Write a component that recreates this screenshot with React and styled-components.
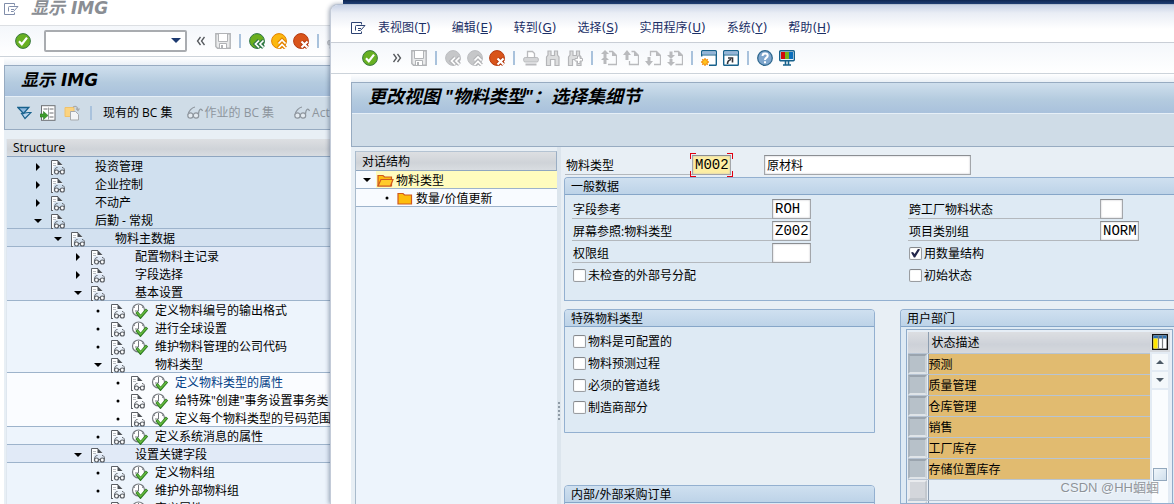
import React, { useState } from "react";
import styled, { createGlobalStyle, css } from "styled-components";

const GlobalStyle = createGlobalStyle`
  * {
    box-sizing: border-box;
  }
  body {
    margin: 0;
    overflow: hidden;
    background: #ffffff;
    color: #000000;
    font-family: "Open Sans", "Noto Sans CJK SC", sans-serif;
    font-size: 12px;
    line-height: 16px;
  }
  button, input, select {
    margin: 0;
    font: inherit;
    color: inherit;
  }
`;

/* ---------- windows ---------- */

const Desktop = styled.div`
  display: flex;
  height: 100vh;
  overflow: hidden;
  position: relative;
  background: linear-gradient(#0f2550, #1d3f7a) 343px 0 / 100% 4px no-repeat #ffffff;
`;

const BackWindow = styled.section`
  flex: 0 0 330px;
  display: flex;
  flex-direction: column;
  overflow: hidden;
  background: #ffffff;
`;

const FrontWindow = styled.section`
  flex: 1;
  min-width: 0;
  display: flex;
  flex-direction: column;
  margin-top: 4px;
  background: #ffffff;
  border-top: 1px solid #b4c0d2;
  border-left: 1px solid #c3cbd8;
  border-top-left-radius: 8px;
  box-shadow: -1px 0 4px rgba(40, 60, 90, 0.45);
  overflow: hidden;
  z-index: 1;
`;

const BackMenu = styled.header`
  display: flex;
  align-items: flex-start;
  gap: 12px;
  height: 26px;
  padding: 0 4px;
  border-bottom: 1px solid #dcdfe3;

  svg {
    margin-top: 3px;
    opacity: 0.6;
  }
`;

const MenuBar = styled.nav`
  display: flex;
  align-items: center;
  gap: 21px;
  height: 38px;
  padding: 9px 20px 0;
  border-bottom: 1px solid #c9ced6;
  background: linear-gradient(#c8d2e6 0, #e9edf5 8px, #ffffff 24px);

  svg {
    margin-right: -9px;
  }
`;

const MenuItem = styled.button`
  padding: 0;
  border: 0;
  background: none;
  color: #1b2f66;
  font-family: "DejaVu Sans", "Noto Sans CJK SC", sans-serif;
  white-space: nowrap;
`;

const Toolbar = styled.div`
  display: flex;
  align-items: center;
  gap: 6px;
  height: 31px;
  padding-left: ${({ $inset }) => $inset}px;
  border-bottom: 1px solid #ccd3da;
  background: linear-gradient(#f4f7fb, #ffffff);
`;

const IconButton = styled.button`
  display: flex;
  flex: none;
  padding: 0;
  border: 0;
  background: none;
  margin-left: ${({ $push }) => ($push ? 5 : 0)}px;
`;

const Divider = styled.span`
  flex: none;
  width: 2px;
  height: 14px;
  margin: 0 2px;
  background: #a9c2dc;
`;

const CommandField = styled.select`
  flex: none;
  appearance: none;
  width: 143px;
  height: 22px;
  margin-left: 7px;
  border: 2px solid #a9acb0;
  border-radius: 2px;
  background: #ffffff;
  grid-area: 1 / 1;
`;

const CommandWrap = styled.label`
  display: grid;
  align-items: center;

  svg {
    grid-area: 1 / 1;
    justify-self: end;
    margin-right: 6px;
    pointer-events: none;
  }
`;

const Sheet = styled.div`
  flex: 1;
  min-height: 0;
  display: flex;
  flex-direction: column;
  margin-left: ${({ $inset }) => $inset}px;
  padding-top: 8px;
  background: linear-gradient(#ffffff, #eaf0f6 8px);
`;

const TitleBox = styled.div`
  flex: none;
  border: 1px solid #97abc1;
  border-right: 0;
  background: #cfdce7;
`;

const Title = styled.h1`
  margin: 0;
  height: 31px;
  padding: 0 0 3px 16px;
  border-bottom: 1px solid #e6eff7;
  background: linear-gradient(#cfdfed, #b4cbdf 55%, #a9c1dc);
  font-family: "DejaVu Sans", "Noto Sans CJK SC", sans-serif;
  font-style: italic;
  font-weight: bold;
  font-size: 17px;
  line-height: 28px;
  white-space: nowrap;
`;

const ViewTitle = styled(Title)`
  font-family: "Open Sans", "Noto Sans CJK SC", sans-serif;
  font-size: 18px;
  line-height: 26px;
`;

const GhostTitle = styled.span`
  font-family: "DejaVu Sans", "Noto Sans CJK SC", sans-serif;
  font-style: italic;
  font-weight: bold;
  font-size: 17px;
  color: #8a8e94;
  white-space: nowrap;
`;

const ActionBar = styled.div`
  display: flex;
  align-items: center;
  gap: 8px;
  height: 32px;
  padding-left: 12px;
`;

const TextButton = styled.button`
  display: flex;
  align-items: center;
  gap: 2px;
  flex: none;
  padding: 0;
  margin: 0 1px;
  border: 0;
  background: none;
  white-space: nowrap;

  &:disabled {
    color: #8d959d;
    margin: 0 7px 0 5px;
  }
`;

/* ---------- trees ---------- */

const TreePanel = styled.div`
  flex: 1;
  min-height: 0;
  overflow: hidden;
  margin-left: 2px;
  border-left: 1px solid #dfe7ef;
  background: #edf4fc;
`;

const TreeArea = styled.div`
  flex: 1;
  min-height: 0;
  display: flex;
  padding-top: 9px;
  background: #e8eff5;
`;

const TreeHead = styled.div`
  height: 18px;
  padding-left: 6px;
  border-bottom: 1px solid #8fa6c0;
  background: linear-gradient(#dddfe2, #cfd3d8 60%, #d9dde1);
  line-height: 17px;
`;

const levelColors = ["#d0e0ef", "#d3e1f0", "#e1eaf7", "#edf4fc", "#fafcff"];

const TreeRow = styled.div`
  display: grid;
  grid-template-columns: 14px 14px 18px auto;
  align-items: center;
  justify-content: start;
  gap: 6px;
  height: 18px;
  padding-left: ${({ $level }) => 24 + $level * 20}px;
  background: ${({ $level }) => levelColors[$level]};
  border-bottom: 1px solid ${({ $line, $level }) => ($line ? "#9db3cb" : levelColors[$level])};
  color: ${({ $active }) => ($active ? "#003c85" : "#000000")};
  line-height: 20px;
  white-space: nowrap;
`;

const Marker = styled.span`
  display: flex;
  align-items: center;
  justify-content: center;
  width: 14px;
`;

const DialogTree = styled.div`
  flex: 0 0 202px;
  margin: 4px 0 0 4px;
  border-left: 1px solid #a9bbcc;
  background: #edf4fc;
`;

const DialogHead = styled(TreeHead)`
  height: 20px;
  border-top: 1px solid #b4c3d2;
  border-right: 1px solid #9aaec4;
  line-height: 20px;
`;

const DialogRow = styled.div`
  display: flex;
  align-items: center;
  height: 18px;
  padding-left: ${({ $level }) => 4 + $level * 20}px;
  border-bottom: 1px solid #9db3cb;
  background: #f8fbff;
`;

const DialogLabel = styled.span`
  flex: 1;
  display: flex;
  align-items: center;
  gap: 2px;
  height: 17px;
  margin-left: 2px;
  padding: 2px 0 0 1px;
  background: ${({ $active }) => ($active ? "#fffcbe" : "none")};
`;

const Splitter = styled.div`
  flex: 0 0 4px;
  display: flex;
  flex-direction: column;
  align-items: center;
  justify-content: center;
  gap: 2px;
  padding-top: 170px;
  background: #dce5ed;

  i {
    width: 2px;
    height: 2px;
    background: #8e9aa6;
  }
`;

/* ---------- form ---------- */

const DialogBody = styled.div`
  flex: 1;
  min-height: 0;
  display: flex;
  background: #e8eff5;
`;

const Main = styled.main`
  flex: 1;
  min-width: 0;
  display: flex;
  flex-direction: column;
  padding: 8px 0 0 3px;
`;

const KeyRow = styled.div`
  display: flex;
  flex: none;
  height: 20px;
  margin-bottom: 2px;
  padding-left: 1px;
`;

const FieldRow = styled.div`
  display: flex;
  height: 20px;
`;

const FieldLabel = styled.label`
  width: ${({ $width }) => $width}px;
  padding-left: 1px;
  border-bottom: 1px solid #b3b8bd;
  line-height: 22px;
  white-space: nowrap;
`;

const TextField = styled.input`
  width: ${({ $width }) => $width}px;
  height: 20px;
  padding: 0 0 0 2px;
  border: 1px solid #a3a6aa;
  border-top-color: #8b8e92;
  border-radius: 0;
  outline: 0;
  background: ${({ $focused }) => ($focused ? "#fdeea3" : "#ffffff")};
  box-shadow: inset 0 0 2px #b9bcc0;
  ${({ $mono }) =>
    $mono &&
    css`
      font-family: "Liberation Mono", monospace;
      font-size: 14px;
    `}
`;

const corner = "linear-gradient(#e00010, #e00010)";

/* red brackets that mark the key field */
const FocusFrame = styled.span`
  display: flex;
  flex: none;
  margin: -2px 31px -2px -2px;
  padding: 2px;
  background:
    ${corner} 0 0 / 6px 1px, ${corner} 0 0 / 1px 6px,
    ${corner} 100% 0 / 6px 1px, ${corner} 100% 0 / 1px 6px,
    ${corner} 0 100% / 6px 1px, ${corner} 0 100% / 1px 6px,
    ${corner} 100% 100% / 6px 1px, ${corner} 100% 100% / 1px 6px;
  background-repeat: no-repeat;
`;

const GroupBox = styled.section`
  flex: none;
  border: 1px solid #93b0d0;
  border-right-width: ${({ $open }) => ($open ? 0 : 1)}px;
  border-radius: ${({ $open }) => ($open ? "4px 0 0 0" : "4px 4px 0 0")};
  background: #deeaf4;
  overflow: hidden;
`;

const GroupTitle = styled.h2`
  margin: 0;
  height: 17px;
  padding-left: 6px;
  border-bottom: 1px solid #86a6c8;
  background: linear-gradient(#cfe0f0, #bdd3e8);
  font-size: 12px;
  font-weight: normal;
  line-height: 18px;
`;

const GroupBody = styled.div`
  display: grid;
  grid-template-columns: ${({ $split }) => ($split ? "336px 1fr" : "1fr")};
  padding: 4px 0 15px 7px;
`;

const Stack = styled.div`
  display: flex;
  flex-direction: column;
  gap: 2px;
`;

const CheckLabel = styled.label`
  display: flex;
  align-items: center;
  gap: 2px;
  height: 20px;
  padding-left: 1px;

  span {
    padding-top: 2px;
  }
`;

const Check = styled.input`
  appearance: none;
  display: grid;
  place-items: center;
  width: 13px;
  height: 13px;
  border: 1px solid #9a9da1;
  border-top-color: #85888c;
  border-radius: 2px;
  background: #ffffff;
  box-shadow: inset 0 0 1px #b9bcc0;

  &:checked::before {
    content: "";
    width: 9px;
    height: 9px;
    background: #22264a;
    clip-path: polygon(0 45%, 22% 38%, 40% 62%, 80% 0, 100% 10%, 46% 100%, 32% 100%);
  }
`;

const Columns = styled.div`
  flex: 1;
  min-height: 0;
  display: flex;
  gap: 25px;
  margin-top: 8px;
`;

const LeftColumn = styled.div`
  flex: 0 0 311px;
  display: flex;
  flex-direction: column;
  gap: 52px;
`;

const DeptBox = styled(GroupBox)`
  flex: 1;
  min-width: 0;
  display: flex;
  flex-direction: column;
`;

const TableFrame = styled.div`
  flex: 1;
  min-height: 0;
  display: flex;
  margin: 2px 1px 0 5px;
  padding: 2px 2px 0 1px;
  border: 1px solid #8fabc9;
  border-bottom: 0;
  background: #e6eef6;
  overflow: hidden;
`;

const DeptTable = styled.table`
  flex: 1;
  width: 100%;
  align-self: flex-start;
  border-collapse: collapse;
  table-layout: fixed;

  th, td {
    padding: 2px 0 0;
    text-align: left;
    font-weight: normal;
    border-bottom: 1px solid #b7c4d3;
  }
  th {
    height: 21px;
    background: linear-gradient(#dcdee2, #cdd1d8 60%, #d5d8dd);
  }
  th:last-child {
    padding-left: 3px;
  }
  td {
    height: 21px;
  }
  th:first-child, td:first-child {
    width: 20px;
    padding: 0;
    border-right: 1px solid #8c9db0;
  }
`;

const DeptCell = styled.td`
  background: ${({ $filled }) => ($filled ? "#e1bb70" : "#e6eef6")};
`;

const RowPicker = styled.button`
  display: block;
  width: 19px;
  height: 20px;
  padding: 0;
  border: 2px solid;
  border-color: ${({ $on }) => ($on ? "#9aa4ae #ccd3d9 #dfe4e8 #a9b3bc" : "#e9ebee #c3c8ce #c3c8ce #e9ebee")};
  background: ${({ $on }) => ($on ? "#b7c1c9" : "#d3d6db")};
`;

const SideBar = styled.div`
  flex: 0 0 20px;
  display: flex;
  flex-direction: column;
  align-items: center;
  gap: 2px;
  background: #e3ebf4;
`;

const ConfigButton = styled.button`
  display: flex;
  align-items: center;
  justify-content: center;
  width: 20px;
  height: 20px;
  padding: 0;
  border: 0;
  background: #d5d8dd;
`;

const ScrollButton = styled.button`
  display: flex;
  align-items: center;
  justify-content: center;
  width: 16px;
  height: 16px;
  padding: 0;
  border: 0;
  background: #f4f8fb;
`;

const Track = styled.div`
  flex: 1;
  width: 16px;
  padding-top: 78px;
  background: #fafcfe;
  display: flex;
  flex-direction: column;
  align-items: center;
`;

const Thumb = styled.div`
  width: 14px;
  height: 13px;
  border: 1px solid #93a8bd;
  background: linear-gradient(135deg, #f0f6fb, #cfdfec);
`;

const Watermark = styled.div`
  position: absolute;
  right: 15px;
  bottom: 6px;
  z-index: 2;
  color: rgba(110, 115, 120, 0.75);
  text-shadow: 1px 1px 0 rgba(255, 255, 255, 0.6);
  font-family: "Liberation Sans", "Noto Sans CJK SC", sans-serif;
  font-size: 13px;
  line-height: 20px;
`;

/* ---------- icons ---------- */

const Svg = ({ w = 16, h = 16, children }) => (
  <svg width={w} height={h} viewBox={`0 0 ${w} ${h}`} fill="none" aria-hidden="true">
    {children}
  </svg>
);

const ExitIcon = () => (
  <Svg w={15} h={12}>
    <path d="M10.5 2.5V.5H.5v11h10V9.500" stroke="#2c4272" />
    <path d="M4.5 8.500v-4q0-1 1-1h8.500L9.5 8.500H7" stroke="#2c4272" />
    <path d="M7 6.500h3" stroke="#2c4272" />
  </Svg>
);

const OkIcon = () => (
  <Svg>
    <circle cx="8" cy="8" r="7.4" fill="#68b022" stroke="#39783f" />
    <path d="M4 8.2l2.8 3L12 4.6" stroke="#fff" strokeWidth="2.2" />
  </Svg>
);

const ChevronsIcon = ({ left }) => (
  <Svg>
    <path
      d={left ? "M7.5 4L4.5 8l3 4M11.5 4l-3 4 3 4" : "M4.5 4l3 4-3 4M8.5 4l3 4-3 4"}
      stroke="#55585c"
      strokeWidth="1.3"
    />
  </Svg>
);

const SaveIcon = () => (
  <Svg>
    <path d="M.8.8h14.4v14.4H2.5L.8 13.5z" fill="#e9eaeb" stroke="#b1b3b6" strokeWidth="1.4" />
    <path d="M3.5 1v7.500h9V1" fill="#fff" stroke="#b1b3b6" />
    <path d="M4.5 15v-4.500h7V15" fill="#fff" stroke="#b1b3b6" />
    <path d="M6 12h2v3H6z" fill="#b1b3b6" />
  </Svg>
);

const navTones = {
  back: ["#6aae1d", "#2f7748"],
  up: ["#fbb80f", "#e38200"],
  cancel: ["#d9541a", "#b53a10"],
  off: ["#c6c7c9", "#bcbdc0"],
};

const NavIcon = ({ kind, off }) => {
  const [fill, stroke] = navTones[off ? "off" : kind];
  const glyph = {
    back: "M10 7.500L6.500 11 10 14.500M14.500 7.500L11 11l3.500 3.500",
    up: "M7.500 10.500L11 7l3.500 3.500M7.500 15L11 11.500 14.500 15",
    cancel: "M8.500 8.500l6 6M14.500 8.500l-6 6",
  }[kind];
  return (
    <Svg>
      <circle cx="8" cy="8" r="7.4" fill={fill} stroke={stroke} />
      <path d={glyph} stroke={off ? "#b4b5b8" : stroke} strokeWidth="4" />
      <path d={glyph} stroke="#fff" strokeWidth={kind === "cancel" ? 2.2 : 1.7} />
    </Svg>
  );
};

const PrintIcon = () => (
  <Svg>
    <path d="M4.500 7V1.500h5l2 2V7" fill="#fff" stroke="#b9babd" strokeWidth="1.3" />
    <rect x=".7" y="7.500" width="14.600" height="4.500" rx="1.500" fill="#d4d5d7" stroke="#b9babd" />
    <path d="M2.500 14.500h11" stroke="#b9babd" strokeWidth="2" />
  </Svg>
);

const FindIcon = ({ next }) => (
  <Svg>
    <path
      d="M1.500 15.500V7L3 5V1h3v4.500h3.500V1h3v4l1.500 2v8.500h-4V9.500H5.500v6z"
      fill="#dcddde"
      stroke="#b4b5b8"
      strokeWidth="1.200"
    />
    {next && (
      <path d="M10.500 6h2.500v2.500h2.500V11H13v2.500h-2.500V11H8V8.500h2.500z" fill="#fff" stroke="#b4b5b8" />
    )}
  </Svg>
);

const PageIcon = ({ kind }) => {
  const arrows = {
    first: "M4 0l4 4H5.500v3h-3V4H0zM4 6l4 4H5.500v4h-3v-4H0z",
    prev: "M4 0l4 5H5.500v5h-3V5H0z",
    next: "M4 16L0 11h2.500V7h3v4H8z",
    last: "M4 9L0 5h2.500V1.500h3V5H8zM4 16l-4-4h2.500V9h3v3H8z",
  };
  const body = {
    first: "M8 1.500h3.500l4 4v9H7",
    prev: "M8.500 1.500h3l4 4v9h-9V11",
    next: "M5.500 6V1.500h6l4 4v9H9",
    last: "M7 1.500h4.500l4 4v9H8.500",
  };
  return (
    <Svg>
      <path d={body[kind]} stroke="#b9babd" strokeWidth="1.300" />
      <path d="M11 1v5h5z" fill="#b9babd" />
      <path d={arrows[kind]} fill="#b9babd" />
    </Svg>
  );
};

const WindowIcon = ({ kind }) => (
  <Svg>
    <rect x=".7" y=".7" width="14.600" height="14.600" rx=".8" fill="#fff" stroke="#17618c" strokeWidth="1.400" />
    <path d="M1.400 1.400h13.200v3.200H1.400z" fill="#93b4d8" />
    <path d="M1 5h14" stroke="#17618c" />
    {kind === "new" ? (
      <>
        <path d="M0 6.500h8V16H0z" fill="#fff" />
        <path d="M4 8v8M0 12h8M1.200 9.200l5.600 5.600M6.800 9.200l-5.600 5.600" stroke="#f39412" strokeWidth="1.300" />
        <circle cx="4" cy="12" r="2.500" fill="#ffc41f" stroke="#f39412" />
      </>
    ) : (
      <path d="M4.500 14c0-3 1-4 3.500-4.500M5 8h4.500v4.500" stroke="#33343a" strokeWidth="1.600" />
    )}
  </Svg>
);

const HelpIcon = () => (
  <Svg>
    <circle cx="8" cy="8" r="7.300" fill="#7fa6cd" stroke="#2f688f" strokeWidth="1.300" />
    <path d="M5.500 6c0-3.500 5.200-3.200 5.200-.3C10.700 7.700 8 7.500 8 10" stroke="#fff" strokeWidth="2" />
    <path d="M7 11.300h2v2H7z" fill="#fff" />
  </Svg>
);

const MonitorIcon = () => (
  <Svg>
    <rect x=".7" y=".7" width="14.600" height="10" rx="1" fill="#e8f2fa" stroke="#17618c" strokeWidth="1.400" />
    <path d="M2 2h4v7H2z" fill="#d30a0a" />
    <path d="M6 2h4v7H6z" fill="#77b31b" />
    <path d="M10 2h4v7h-4z" fill="#0a6ebd" />
    <path d="M6.500 11v4M9.500 11v4M4 15h8" stroke="#17618c" strokeWidth="1.600" />
  </Svg>
);

const ExpandIcon = () => (
  <Svg w={15} h={14}>
    <path d="M4.500 7.500l3.500 5 6-6h-2.500z" fill="#b9d4ec" stroke="#17618c" strokeWidth="1.200" />
    <path d="M.8 1.500h11L6.500 7.500z" fill="#8fb8de" stroke="#17618c" strokeWidth="1.300" />
  </Svg>
);

const ListArrowIcon = () => (
  <Svg>
    <rect x="1.500" y=".7" width="13.500" height="14.600" fill="#fff" stroke="#6c6f72" />
    <path d="M3.500 4h4M9.500 4h4M9.500 8h4M9.500 12h4" stroke="#6c6f72" />
    <path d="M8.500 2.500v12" stroke="#9da0a3" />
    <path d="M0 9h3.500V6.500L8 10.500l-4.500 4V12H0z" fill="#3e9b2c" stroke="#287a22" strokeWidth=".6" />
  </Svg>
);

const CopyIcon = () => (
  <Svg>
    <path d="M1 2.500h9v9H1z" fill="#fbd380" stroke="#f0c26a" />
    <path d="M6.500 6.500h5l3 3v5.500h-8z" fill="#f4f5f6" stroke="#a7aaad" />
    <path d="M9 2c3-1.500 5 0 5 3.500M12 3.500l2 2 1.500-2" stroke="#a7aaad" strokeWidth="1.200" />
  </Svg>
);

const GlassesIcon = () => (
  <Svg>
    <path
      d="M8 2C5 2.500 1.500 6 1 10M15.500 6C14.500 3 12 3.500 11.500 9"
      stroke="#8d959d"
      strokeWidth="1.200"
    />
    <circle cx="3.500" cy="10.500" r="2.700" fill="#e3eaf0" stroke="#8d959d" strokeWidth="1.200" />
    <circle cx="9" cy="10.500" r="2.700" fill="#e3eaf0" stroke="#8d959d" strokeWidth="1.200" />
  </Svg>
);

const DocIcon = () => (
  <Svg w={14} h={15}>
    <path d="M.5 0v14.500h2V7L6 5.500h5.500V5L7 .5z" fill="#fff" />
    <path d="M.5 14.500V.5H7" stroke="#5c6066" />
    <path d="M0 14.500h2" stroke="#5c6066" />
    <path d="M6.500 0l5 5h-5z" fill="#4d5157" />
    <path d="M2 3.500h3M2 5.500h3" stroke="#b9bdc2" />
    <path d="M3.500 11.500c0-2.500 1-4 3-4M13.500 11.500c0-2.500-.5-4-2.500-4" stroke="#5c6066" />
    <circle cx="5.500" cy="12" r="2" fill="#fff" stroke="#5c6066" strokeWidth="1.200" />
    <circle cx="11.300" cy="12" r="2" fill="#fff" stroke="#5c6066" strokeWidth="1.200" />
    <path d="M7.500 11.500h2" stroke="#5c6066" />
  </Svg>
);

const RunIcon = () => (
  <Svg w={18} h={16}>
    <circle cx="7.500" cy="7" r="6" fill="#fff" stroke="#74787e" strokeWidth="1.200" />
    <path d="M7.500 2v6H4M3 4l1 .5M12 4l-1 .5" stroke="#74787e" />
    <path d="M5.500 9l4 5 6.500-7.500" stroke="#2c7a22" strokeWidth="3" />
    <path d="M6 9.500l3.500 4 6-6.500" stroke="#66bb3c" strokeWidth="1.500" />
  </Svg>
);

const FolderIcon = ({ open }) => (
  <Svg w={17} h={13}>
    <path d="M1 12V1.500h5l1.500 1.500h7V12z" fill="#fdbd0d" stroke="#d0581e" strokeWidth="1.200" />
    {open && <path d="M1 12l3-6.500h12L13.500 12z" fill="#ffcb2b" stroke="#d0581e" strokeWidth="1.200" />}
  </Svg>
);

const Arrow = ({ dir, color = "#000" }) => {
  if (dir === "dot") {
    return (
      <Svg w={4} h={4}>
        <circle cx="2" cy="2" r="1.500" fill={color} />
      </Svg>
    );
  }
  const shapes = {
    right: "M2 0v8l4-4z",
    down: "M0 2h8L4 6z",
    up: "M0 6h8L4 2z",
  };
  return (
    <Svg w={8} h={8}>
      <path d={shapes[dir]} fill={color} />
    </Svg>
  );
};

const LayoutIcon = () => (
  <Svg>
    <rect x=".7" y=".7" width="14.600" height="14.600" fill="#fff" stroke="#111" strokeWidth="1.400" />
    <path d="M1.400 1.400h13.200v3H1.400z" fill="#2d6fae" />
    <path d="M1.400 4.400h4.200v10H1.400z" fill="#ffe600" />
    <path d="M6.500 2v12.500M10.500 2v12.500" stroke="#7a7d80" strokeWidth="1.200" />
  </Svg>
);

/* ---------- data ---------- */

const imgTree = [
  { level: 0, mark: "right", text: "投资管理" },
  { level: 0, mark: "right", text: "企业控制" },
  { level: 0, mark: "right", text: "不动产" },
  { level: 0, mark: "down", text: "后勤 - 常规", line: true },
  { level: 1, mark: "down", text: "物料主数据", line: true },
  { level: 2, mark: "right", text: "配置物料主记录" },
  { level: 2, mark: "right", text: "字段选择" },
  { level: 2, mark: "down", text: "基本设置", line: true },
  { level: 3, mark: "dot", text: "定义物料编号的输出格式" },
  { level: 3, mark: "dot", text: "进行全球设置" },
  { level: 3, mark: "dot", text: "维护物料管理的公司代码" },
  { level: 3, mark: "down", text: "物料类型", line: true },
  { level: 4, mark: "dot", text: "定义物料类型的属性", active: true },
  { level: 4, mark: "dot", text: '给特殊"创建"事务设置事务类' },
  { level: 4, mark: "dot", text: "定义每个物料类型的号码范围", line: true },
  { level: 3, mark: "dot", text: "定义系统消息的属性", line: true },
  { level: 2, mark: "down", text: "设置关键字段", line: true },
  { level: 3, mark: "dot", text: "定义物料组" },
  { level: 3, mark: "dot", text: "维护外部物料组" },
  { level: 3, mark: "dot", text: "定义属性" },
];

const menus = [
  ["表视图", "T"],
  ["编辑", "E"],
  ["转到", "G"],
  ["选择", "S"],
  ["实用程序", "U"],
  ["系统", "Y"],
  ["帮助", "H"],
];

const departments = ["预测", "质量管理", "仓库管理", "销售", "工厂库存", "存储位置库存", "", ""];

const specialTypes = ["物料是可配置的", "物料预测过程", "必须的管道线", "制造商部分"];

/* ---------- parts ---------- */

const Tool = ({ label, push, children }) => (
  <IconButton type="button" aria-label={label} title={label} $push={push}>
    {children}
  </IconButton>
);

const CheckField = ({ label, initial = false }) => {
  const [checked, setChecked] = useState(initial);
  return (
    <CheckLabel>
      <Check type="checkbox" checked={checked} onChange={() => setChecked(!checked)} />
      <span>{label}</span>
    </CheckLabel>
  );
};

const Field = ({ id, label, labelWidth, width, value = "" }) => (
  <FieldRow>
    <FieldLabel htmlFor={id} $width={labelWidth}>
      {label}
    </FieldLabel>
    <TextField id={id} $width={width} $mono defaultValue={value} />
  </FieldRow>
);

const ImgWindow = () => (
  <BackWindow>
    <BackMenu>
      <ExitIcon />
      <GhostTitle>显示 IMG</GhostTitle>
    </BackMenu>
    <Toolbar $inset={15}>
      <Tool label="确认"><OkIcon /></Tool>
      <CommandWrap>
        <CommandField aria-label="命令" />
        <Svg w={10} h={6}>
          <path d="M0 0h10L5 5z" fill="#1d3a70" />
        </Svg>
      </CommandWrap>
      <Tool label="收起"><ChevronsIcon left /></Tool>
      <Tool label="保存"><SaveIcon /></Tool>
      <Divider />
      <Tool label="返回"><NavIcon kind="back" /></Tool>
      <Tool label="退出"><NavIcon kind="up" /></Tool>
      <Tool label="取消"><NavIcon kind="cancel" /></Tool>
      <Divider />
      <Tool label="打印"><PrintIcon /></Tool>
    </Toolbar>
    <Sheet $inset={4}>
      <TitleBox>
        <Title>显示 IMG</Title>
        <ActionBar>
          <Tool label="展开"><ExpandIcon /></Tool>
          <Tool label="定位"><ListArrowIcon /></Tool>
          <Tool label="复制"><CopyIcon /></Tool>
          <Divider />
          <TextButton type="button">现有的 BC 集</TextButton>
          <TextButton type="button" disabled>
            <GlassesIcon />
            作业的 BC 集
          </TextButton>
          <TextButton type="button" disabled>
            <GlassesIcon />
            Act
          </TextButton>
        </ActionBar>
      </TitleBox>
      <TreeArea>
        <TreePanel>
          <TreeHead>Structure</TreeHead>
          {imgTree.map((item, index) => (
            <TreeRow key={index} $level={item.level} $line={item.line} $active={item.active}>
              <Marker>
                <Arrow dir={item.mark} />
              </Marker>
              <DocIcon />
              {item.mark === "dot" ? <RunIcon /> : <span />}
              <span>{item.text}</span>
            </TreeRow>
          ))}
        </TreePanel>
      </TreeArea>
    </Sheet>
  </BackWindow>
);

const DeptPanel = () => (
  <DeptBox $open>
    <GroupTitle>用户部门</GroupTitle>
    <TableFrame>
      <DeptTable>
        <thead>
          <tr>
            <th aria-label="选择" />
            <th>状态描述</th>
          </tr>
        </thead>
        <tbody>
          {departments.map((name, index) => (
            <tr key={index}>
              <td>
                <RowPicker type="button" aria-label={`选择行 ${index + 1}`} $on={!!name} />
              </td>
              <DeptCell $filled={!!name}>{name}</DeptCell>
            </tr>
          ))}
        </tbody>
      </DeptTable>
      <SideBar>
        <ConfigButton type="button" aria-label="配置"><LayoutIcon /></ConfigButton>
        <ScrollButton type="button" aria-label="向上"><Arrow dir="up" color="#4d5a66" /></ScrollButton>
        <ScrollButton type="button" aria-label="向下"><Arrow dir="down" color="#4d5a66" /></ScrollButton>
        <Track>
          <Thumb />
        </Track>
      </SideBar>
    </TableFrame>
  </DeptBox>
);

const ViewWindow = () => (
  <FrontWindow>
    <MenuBar>
      <ExitIcon />
      {menus.map(([name, key]) => (
        <MenuItem type="button" key={key}>
          {name}(<u>{key}</u>)
        </MenuItem>
      ))}
    </MenuBar>
    <Toolbar $inset={31}>
      <Tool label="确认"><OkIcon /></Tool>
      <Tool label="展开" push><ChevronsIcon /></Tool>
      <Tool label="保存"><SaveIcon /></Tool>
      <Divider />
      <Tool label="返回"><NavIcon kind="back" off /></Tool>
      <Tool label="退出"><NavIcon kind="up" off /></Tool>
      <Tool label="取消"><NavIcon kind="cancel" /></Tool>
      <Divider />
      <Tool label="打印"><PrintIcon /></Tool>
      <Tool label="查找"><FindIcon /></Tool>
      <Tool label="查找下一个"><FindIcon next /></Tool>
      <Divider />
      <Tool label="首页"><PageIcon kind="first" /></Tool>
      <Tool label="上一页"><PageIcon kind="prev" /></Tool>
      <Tool label="下一页"><PageIcon kind="next" /></Tool>
      <Tool label="末页"><PageIcon kind="last" /></Tool>
      <Divider />
      <Tool label="新窗口"><WindowIcon kind="new" /></Tool>
      <Tool label="快捷方式"><WindowIcon kind="link" /></Tool>
      <Divider />
      <Tool label="帮助"><HelpIcon /></Tool>
      <Tool label="布局"><MonitorIcon /></Tool>
    </Toolbar>
    <Sheet $inset={20}>
      <TitleBox>
        <ViewTitle>更改视图 "物料类型"：选择集细节</ViewTitle>
        <ActionBar />
      </TitleBox>
      <DialogBody>
        <DialogTree>
          <DialogHead>对话结构</DialogHead>
          <DialogRow $level={0}>
            <Marker><Arrow dir="down" /></Marker>
            <DialogLabel $active>
              <FolderIcon open />
              物料类型
            </DialogLabel>
          </DialogRow>
          <DialogRow $level={1}>
            <Marker><Arrow dir="dot" /></Marker>
            <DialogLabel>
              <FolderIcon />
              数量/价值更新
            </DialogLabel>
          </DialogRow>
        </DialogTree>
        <Splitter>
          <i /><i /><i /><i /><i />
        </Splitter>
        <Main>
          <KeyRow>
            <FieldLabel htmlFor="mtart" $width={127}>物料类型</FieldLabel>
            <FocusFrame>
              <TextField id="mtart" $width={39} $mono $focused defaultValue="M002" />
            </FocusFrame>
            <TextField aria-label="物料类型描述" $width={207} defaultValue="原材料" />
          </KeyRow>
          <GroupBox $open>
            <GroupTitle>一般数据</GroupTitle>
            <GroupBody $split>
              <Stack>
                <Field id="ref" label="字段参考" labelWidth={200} width={39} value="ROH" />
                <Field id="screen" label="屏幕参照:物料类型" labelWidth={200} width={39} value="Z002" />
                <Field id="auth" label="权限组" labelWidth={200} width={39} />
                <CheckField label="未检查的外部号分配" />
              </Stack>
              <Stack>
                <Field id="plant" label="跨工厂物料状态" labelWidth={192} width={23} />
                <Field id="cat" label="项目类别组" labelWidth={192} width={39} value="NORM" />
                <CheckField label="用数量结构" initial />
                <CheckField label="初始状态" />
              </Stack>
            </GroupBody>
          </GroupBox>
          <Columns>
            <LeftColumn>
              <GroupBox>
                <GroupTitle>特殊物料类型</GroupTitle>
                <GroupBody>
                  <Stack>
                    {specialTypes.map((label) => (
                      <CheckField key={label} label={label} />
                    ))}
                  </Stack>
                </GroupBody>
              </GroupBox>
              <GroupBox>
                <GroupTitle>内部/外部采购订单</GroupTitle>
                <GroupBody />
              </GroupBox>
            </LeftColumn>
            <DeptPanel />
          </Columns>
        </Main>
      </DialogBody>
    </Sheet>
  </FrontWindow>
);

const App = () => {
  return (
    <>
      <GlobalStyle />
      <Desktop>
        <ImgWindow />
        <ViewWindow />
        <Watermark>CSDN @HH蝈蝈</Watermark>
      </Desktop>
    </>
  );
};

export default App;
